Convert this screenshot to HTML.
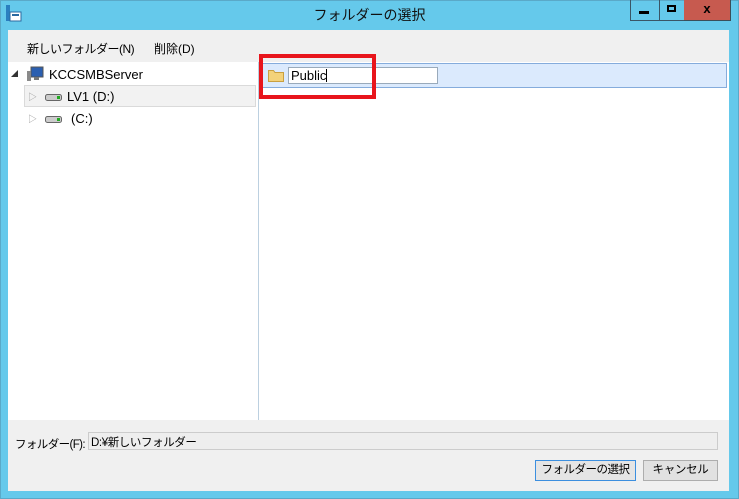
<!DOCTYPE html>
<html><head><meta charset="utf-8"><style>
*{margin:0;padding:0;box-sizing:border-box}
body{width:739px;height:499px;background:#65c9eb;position:relative;overflow:hidden;font-family:"Liberation Sans","Noto Sans CJK JP",sans-serif;font-size:12px;color:#000}
.a{position:absolute}
</style></head><body>
<div class="a" style="left:0;top:0;width:739px;height:499px;border:1px solid #5aa9c8"></div>
<svg class="a" style="left:5px;top:4px" width="20" height="20" viewBox="0 0 20 20"><rect x="1" y="1" width="4" height="16" fill="#2a7fc0"/><rect x="5" y="8" width="11" height="9" fill="#fff" stroke="#2a6aa0"/><rect x="7" y="10" width="7" height="2" fill="#2a6aa0"/></svg>
<div class="a" style="left:0;width:739px;top:5px;text-align:center;font-size:14px;color:#111">フォルダーの選択</div>
<div class="a" style="left:630px;top:0;width:30px;height:21px;border:1px solid #3a5566;border-top:none"><div class="a" style="left:8px;top:11px;width:10px;height:3px;background:#000"></div></div>
<div class="a" style="left:659px;top:0;width:26px;height:21px;border:1px solid #3a5566;border-top:none;border-left:none"><div class="a" style="left:8px;top:5px;width:9px;height:7px;border:2px solid #000"></div></div>
<div class="a" style="left:684px;top:0;width:47px;height:21px;background:#c75a4f;border:1px solid #3a4f5a;border-top:none;border-left:none;text-align:center;font-weight:bold;font-size:13px;line-height:18px">x</div>
<div class="a" style="left:8px;top:30px;width:721px;height:461px;background:#f0f0f0"></div>
<div class="a" style="left:27px;top:40px;letter-spacing:-0.5px">新しいフォルダー(N)</div>
<div class="a" style="left:154px;top:40px">削除(D)</div>
<div class="a" style="left:8px;top:62px;width:250px;height:358px;background:#fff"></div>
<div class="a" style="left:258px;top:62px;width:1px;height:358px;background:#bcd0e0"></div>
<div class="a" style="left:259px;top:62px;width:470px;height:358px;background:#fff"></div>
<div class="a" style="left:11px;top:69px;font-size:7px;color:#333">◢</div>
<svg class="a" style="left:27px;top:66px" width="18" height="16"><rect x="4" y="1" width="12" height="10" fill="#2b5fb0" stroke="#555"/><rect x="0" y="5" width="4" height="10" fill="#8a8a8a"/><rect x="7" y="11" width="5" height="3" fill="#777"/></svg>
<div class="a" style="left:49px;top:67px;font-size:13px">KCCSMBServer</div>
<div class="a" style="left:24px;top:85px;width:232px;height:22px;background:#f2f2f2;border:1px solid #dadada"></div>
<div class="a" style="left:28px;top:90px;font-size:9px;color:#999">▷</div>
<svg class="a" style="left:45px;top:93px" width="18" height="9"><rect x="0.5" y="1.5" width="16" height="6" rx="2" fill="#ccc" stroke="#666"/><rect x="12" y="3" width="3" height="3" fill="#2a2"/></svg>
<div class="a" style="left:67px;top:89px;font-size:13px">LV1 (D:)</div>
<div class="a" style="left:28px;top:112px;font-size:9px;color:#999">▷</div>
<svg class="a" style="left:45px;top:115px" width="18" height="9"><rect x="0.5" y="1.5" width="16" height="6" rx="2" fill="#ccc" stroke="#666"/><rect x="12" y="3" width="3" height="3" fill="#2a2"/></svg>
<div class="a" style="left:71px;top:111px;font-size:13px">(C:)</div>
<div class="a" style="left:260px;top:63px;width:467px;height:25px;background:#dbeafd;border:1px solid #85acdc"></div>
<svg class="a" style="left:268px;top:68px" width="16" height="14"><path d="M0.5 2.5h5l1.5 2h8.5v9h-15z" fill="#f3d27a" stroke="#c9a040"/></svg>
<div class="a" style="left:288px;top:67px;width:150px;height:17px;background:#fff;border:1px solid #9ab"></div>
<div class="a" style="left:291px;top:68px;font-size:13px">Public<span style="display:inline-block;width:1px;height:13px;background:#000;vertical-align:-2px"></span></div>
<div class="a" style="left:259px;top:54px;width:117px;height:45px;border:4px solid #e8151c"></div>
<div class="a" style="left:15px;top:436px;font-size:11.5px;letter-spacing:-0.6px">フォルダー(F):</div>
<div class="a" style="left:88px;top:432px;width:630px;height:18px;background:#eee;border:1px solid #ccc;padding:1px 2px;font-size:11.5px;letter-spacing:-0.4px">D:¥新しいフォルダー</div>
<div class="a" style="left:535px;top:460px;width:101px;height:21px;background:#e5e5e5;border:1px solid #3c8fdf;text-align:center;line-height:19px;font-size:11.5px;letter-spacing:-0.5px">フォルダーの選択</div>
<div class="a" style="left:643px;top:460px;width:75px;height:21px;background:#e1e1e1;border:1px solid #adadad;text-align:center;line-height:19px;font-size:11.5px;letter-spacing:-0.3px">キャンセル</div>
</body></html>
